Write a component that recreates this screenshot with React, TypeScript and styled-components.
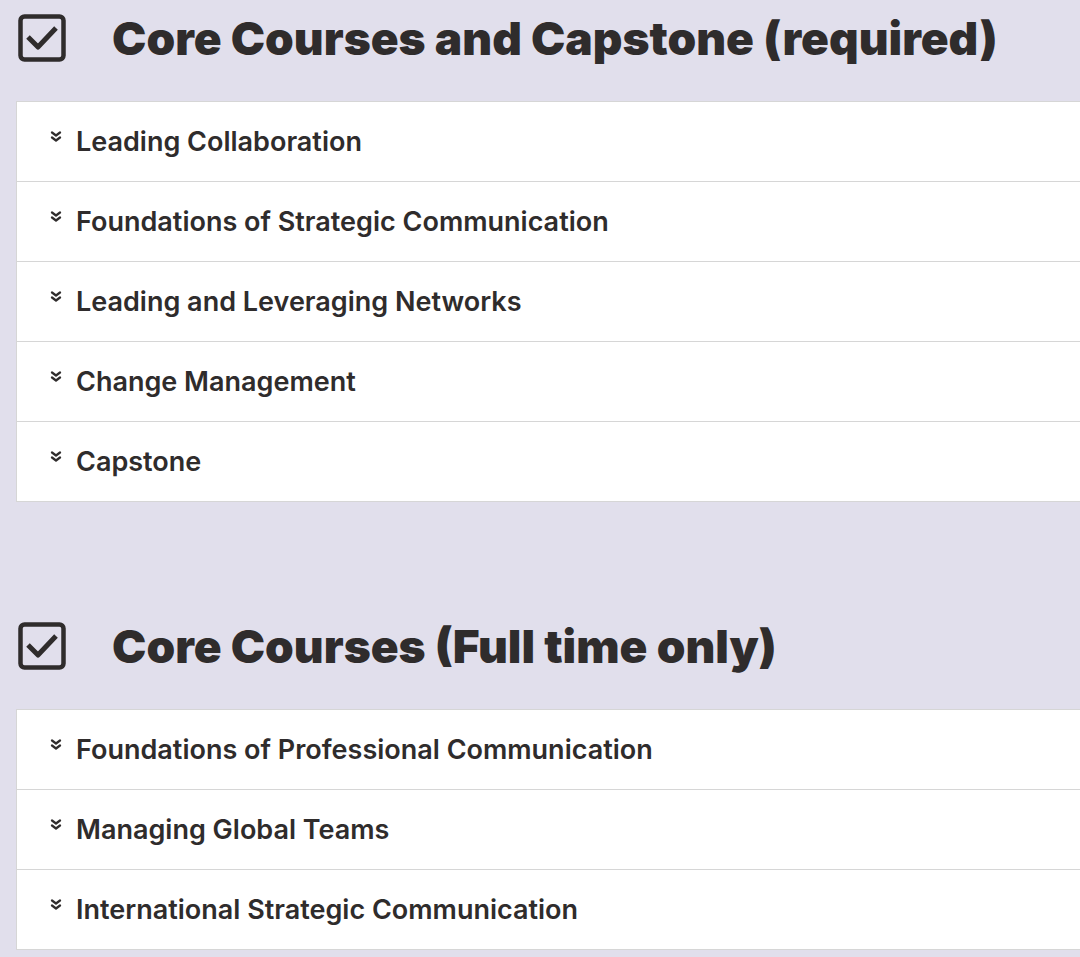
import styled, { createGlobalStyle } from 'styled-components';

const GlobalStyle = createGlobalStyle`
  html, body {
    margin: 0;
    padding: 0;
    background: #e1dfec;
  }
  body {
    font-family: Inter, "Liberation Sans", sans-serif;
    color: #2f2c2c;
    overflow: hidden;
  }
`;

const Page = styled.main`
  width: 1080px;
  padding: 14px 0 0 16px;
  box-sizing: border-box;
`;

const Section = styled.section`
  & + & {
    margin-top: 120px;
  }
`;

const Heading = styled.h2`
  display: flex;
  align-items: center;
  gap: 46px;
  margin: 0 0 39px 2px;
  height: 48px;
  font-family: Inter, "Liberation Sans", Arial, sans-serif;
  font-size: 46px;
  font-weight: 900;
  white-space: nowrap;
  color: #2f2c2c;
`;

const Box = styled.svg`
  flex: none;
  width: 48px;
  height: 48px;
`;

const List = styled.ul`
  list-style: none;
  margin: 0;
  padding: 0;
  width: 1100px;
  background: #fff;
  border: 1px solid #d6d6d6;
  border-right: none;
`;

const Row = styled.li`
  display: flex;
  align-items: center;
  gap: 14px;
  height: 79px;
  padding-left: 33px;
  font-size: 27px;
  font-weight: 600;

  & + & {
    border-top: 1px solid #d6d6d6;
  }
`;

const Chevron = styled.svg`
  flex: none;
  width: 12px;
  height: 12px;
  margin-top: -10px;
`;

function CheckBox() {
  return (
    <Box viewBox="0 0 48 48">
      <rect x="2.5" y="2.5" width="43" height="43" rx="4" fill="none" stroke="#2f2c2c" strokeWidth="4.5" />
      <path d="M10 23 L20 33 L38 14" fill="none" stroke="#2f2c2c" strokeWidth="5" strokeLinejoin="round" />
    </Box>
  );
}

function DoubleDown() {
  return (
    <Chevron viewBox="0 0 12 12">
      <path d="M2 1.5 L6 4.5 L10 1.5 M2 6.5 L6 9.5 L10 6.5" fill="none" stroke="#2f2c2c" strokeWidth="2.2" strokeLinecap="round" strokeLinejoin="round" />
    </Chevron>
  );
}

const sections = [
  {
    title: 'Core Courses and Capstone (required)',
    items: [
      'Leading Collaboration',
      'Foundations of Strategic Communication',
      'Leading and Leveraging Networks',
      'Change Management',
      'Capstone',
    ],
  },
  {
    title: 'Core Courses (Full time only)',
    items: [
      'Foundations of Professional Communication',
      'Managing Global Teams',
      'International Strategic Communication',
    ],
  },
];

export default function App() {
  return (
    <>
      <GlobalStyle />
      <Page>
        {sections.map((s) => (
          <Section key={s.title}>
            <Heading>
              <CheckBox />
              {s.title}
            </Heading>
            <List>
              {s.items.map((item) => (
                <Row key={item}>
                  <DoubleDown />
                  {item}
                </Row>
              ))}
            </List>
          </Section>
        ))}
      </Page>
    </>
  );
}
